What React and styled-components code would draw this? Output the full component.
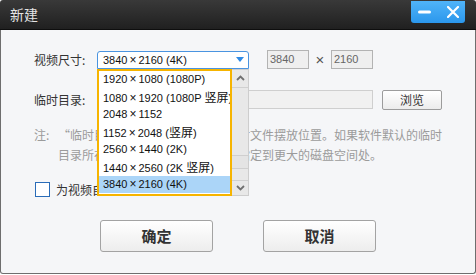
import React from 'react';
import styled, { createGlobalStyle } from 'styled-components';

const Global = createGlobalStyle`
  * { box-sizing: border-box; }
  html, body { margin: 0; padding: 0; background: #ffffff; }
  body { font-family: "Noto Sans CJK SC", "Liberation Sans", sans-serif; font-size: 12px; color: #333; }
`;

const Window = styled.div`
  width: 476px;
  height: 274px;
  display: flex;
  flex-direction: column;
`;

const TitleBar = styled.div`
  height: 30px;
  flex: none;
  display: flex;
  align-items: flex-start;
  justify-content: space-between;
  background: linear-gradient(#393939, #202020);
  border-bottom: 1px solid #0e0e0e;
  border-radius: 3px 3px 0 0;
  padding: 0 11px 0 10px;
`;

const Title = styled.div`
  color: #e4e4e4;
  font-size: 14px;
  line-height: 29px;
`;

const WinButtons = styled.div`
  margin-top: 1px;
  width: 54px;
  height: 22px;
  display: flex;
  align-items: center;
  justify-content: space-between;
  padding: 0 6px 0 7px;
  background: linear-gradient(#50b4f9, #2b97ec);
  border-radius: 0 0 3px 3px;
`;

const Body = styled.div`
  flex: 1;
  background: #f5f6f8;
  border: 1px solid #6e6e6e;
  border-top: none;
  border-radius: 0 0 3px 3px;
  padding: 20px 0 0 33px;
  display: flex;
  flex-direction: column;
`;

const Row = styled.div`
  display: flex;
  align-items: center;
  height: 19px;
  margin-top: ${p => p.$mt || 0}px;
`;

const Label = styled.div`
  width: 63px;
  color: #333;
  font-size: 12px;
  line-height: 19px;
  white-space: nowrap;
`;

const SelectWrap = styled.div`
  position: relative;
  width: 152px;
  height: 18px;
  z-index: 5;
`;

const SelectBox = styled.div`
  height: 18px;
  border: 1px solid #4a94e0;
  border-radius: 3px 3px 0 0;
  background: #fff;
  display: flex;
  align-items: center;
  justify-content: space-between;
  padding: 0 4px 0 5px;
  font-family: "Liberation Sans", "Noto Sans CJK SC", sans-serif;
  font-size: 11px;
  color: #111;
`;

const DropPanel = styled.div`
  position: absolute;
  left: 0;
  top: 18px;
  width: 152px;
  height: 127px;
  display: flex;
`;

const ListBox = styled.div`
  flex: 1;
  border: 2px solid #f6b400;
  background: #fff;
  overflow: hidden;
`;

const Item = styled.div`
  height: 17.5px;
  line-height: 17.5px;
  padding-left: 4px;
  white-space: nowrap;
  overflow: hidden;
  font-family: "Liberation Sans", "Noto Sans CJK SC", sans-serif;
  font-size: 11px;
  color: #111;
  background: ${p => (p.$selected ? '#abd5f8' : 'transparent')};
`;

const Times = styled.span`
  margin: 0 2px;
  font-size: 12px;
`;

const Cjk = styled.span`
  font-family: "Noto Sans CJK SC", sans-serif;
  font-size: 12px;
`;

const ScrollBar = styled.div`
  width: 17px;
  background: #e8e8e8;
  border: 1px solid #cdcdcd;
  border-left: none;
  display: flex;
  flex-direction: column;
`;

const ScrollBtn = styled.div`
  height: ${p => p.$h}px;
  flex: none;
  display: flex;
  align-items: center;
  justify-content: center;
  border-${p => (p.$up ? 'bottom' : 'top')}: 1px solid #d0d0d0;
`;

const Track = styled.div`
  flex: 1;
  display: flex;
  flex-direction: column;
`;

const Thumb = styled.div`
  margin-top: 67px;
  height: 14px;
  border-top: 1px solid #cfcfcf;
  border-bottom: 1px solid #cfcfcf;
  background: #e4e4e4;
`;

const SizeBox = styled.div`
  width: 42px;
  height: 19px;
  margin-left: ${p => p.$ml || 0}px;
  border: 1px solid #b3b3b3;
  background: #efefef;
  color: #666;
  padding-left: 2px;
  font-family: "Liberation Sans", sans-serif;
  font-size: 11px;
  line-height: 17px;
`;

const Cross = styled.div`
  width: 22px;
  text-align: center;
  color: #555;
  font-family: "Liberation Sans", sans-serif;
  font-size: 15px;
  line-height: 19px;
`;

const DirInput = styled.div`
  width: 276px;
  height: 19px;
  border: 1px solid #cfcfcf;
  background: #f1f1f1;
`;

const SmallButton = styled.div`
  margin-left: 9px;
  width: 60px;
  height: 20px;
  border: 1px solid #9c9c9c;
  border-radius: 2px;
  background: linear-gradient(#ffffff, #ececec);
  text-align: center;
  line-height: 18px;
  font-size: 12px;
  color: #333;
`;

const Note = styled.div`
  margin-top: 16px;
  display: flex;
  color: #9b9b9b;
  font-size: 12px;
  line-height: 20px;
`;

const NoteLabel = styled.div`
  width: 24px;
  flex: none;
`;

const NoteLine = styled.div`
  white-space: nowrap;
`;

const CheckRow = styled.div`
  margin-top: 17px;
  height: 15px;
  display: flex;
  align-items: center;
  padding-left: 1px;
`;

const CheckBox = styled.div`
  width: 15px;
  height: 15px;
  border: 1px solid #2a6cb8;
  background: #fff;
`;

const CheckLabel = styled.div`
  margin-left: 6px;
  color: #333;
  font-size: 12px;
  line-height: 15px;
`;

const ButtonRow = styled.div`
  margin-top: 23px;
  padding-left: 66px;
  display: flex;
  gap: 50px;
`;

const BigButton = styled.div`
  width: 113px;
  height: 32px;
  border: 1px solid #a3a3a3;
  border-radius: 3px;
  background: linear-gradient(#ffffff, #ededed);
  text-align: center;
  line-height: 30px;
  font-size: 15px;
  font-weight: bold;
  color: #333;
`;

const Chevron = ({ up }) => (
  <svg width="9" height="6" viewBox="0 0 9 6">
    <polyline
      points={up ? '1,5 4.5,1.5 8,5' : '1,1 4.5,4.5 8,1'}
      fill="none"
      stroke="#707070"
      strokeWidth="1.8"
    />
  </svg>
);

const Res = ({ w, h, children }) => (
  <>
    {w}
    <Times>×</Times>
    {h}
    {children}
  </>
);

const items = [
  { w: 1920, h: 1080, s: <> (1080P)</> },
  { w: 1080, h: 1920, s: <> (1080P <Cjk>竖屏</Cjk>)</> },
  { w: 2048, h: 1152, s: null },
  { w: 1152, h: 2048, s: <> (<Cjk>竖屏</Cjk>)</> },
  { w: 2560, h: 1440, s: <> (2K)</> },
  { w: 1440, h: 2560, s: <> (2K <Cjk>竖屏</Cjk>)</> },
  { w: 3840, h: 2160, s: <> (4K)</>, selected: true },
];

export default function App() {
  return (
    <>
      <Global />
      <Window>
        <TitleBar>
          <Title>新建</Title>
          <WinButtons>
            <svg width="13" height="4" viewBox="0 0 13 4">
              <line x1="1.5" y1="2" x2="11.5" y2="2" stroke="#fff" strokeWidth="3" strokeLinecap="round" />
            </svg>
            <svg width="12" height="12" viewBox="0 0 12 12">
              <path d="M1 1 L11 11 M11 1 L1 11" stroke="#fff" strokeWidth="2.2" strokeLinecap="round" />
            </svg>
          </WinButtons>
        </TitleBar>
        <Body>
          <Row>
            <Label>视频尺寸:</Label>
            <SelectWrap>
              <SelectBox>
                <span>
                  <Res w={3840} h={2160}> (4K)</Res>
                </span>
                <svg width="8" height="5" viewBox="0 0 8 5">
                  <polygon points="0,0 8,0 4,5" fill="#2f8be6" />
                </svg>
              </SelectBox>
              <DropPanel>
                <ListBox>
                  {items.map(it => (
                    <Item key={`${it.w}x${it.h}`} $selected={it.selected}>
                      <Res w={it.w} h={it.h}>{it.s}</Res>
                    </Item>
                  ))}
                </ListBox>
                <ScrollBar>
                  <ScrollBtn $up $h={18}>
                    <Chevron up />
                  </ScrollBtn>
                  <Track>
                    <Thumb />
                  </Track>
                  <ScrollBtn $h={15}>
                    <Chevron />
                  </ScrollBtn>
                </ScrollBar>
              </DropPanel>
            </SelectWrap>
            <SizeBox $ml={18}>3840</SizeBox>
            <Cross>×</Cross>
            <SizeBox>2160</SizeBox>
          </Row>
          <Row $mt={21}>
            <Label>临时目录:</Label>
            <DirInput />
            <SmallButton>浏览</SmallButton>
          </Row>
          <Note>
            <NoteLabel>注:</NoteLabel>
            <div>
              <NoteLine>“临时目录”是视频合成过程中临时文件摆放位置。如果软件默认的临时</NoteLine>
              <NoteLine>目录所在磁盘空间不足时，请将其指定到更大的磁盘空间处。</NoteLine>
            </div>
          </Note>
          <CheckRow>
            <CheckBox />
            <CheckLabel>为视频自动匹配尺寸</CheckLabel>
          </CheckRow>
          <ButtonRow>
            <BigButton>确定</BigButton>
            <BigButton>取消</BigButton>
          </ButtonRow>
        </Body>
      </Window>
    </>
  );
}
